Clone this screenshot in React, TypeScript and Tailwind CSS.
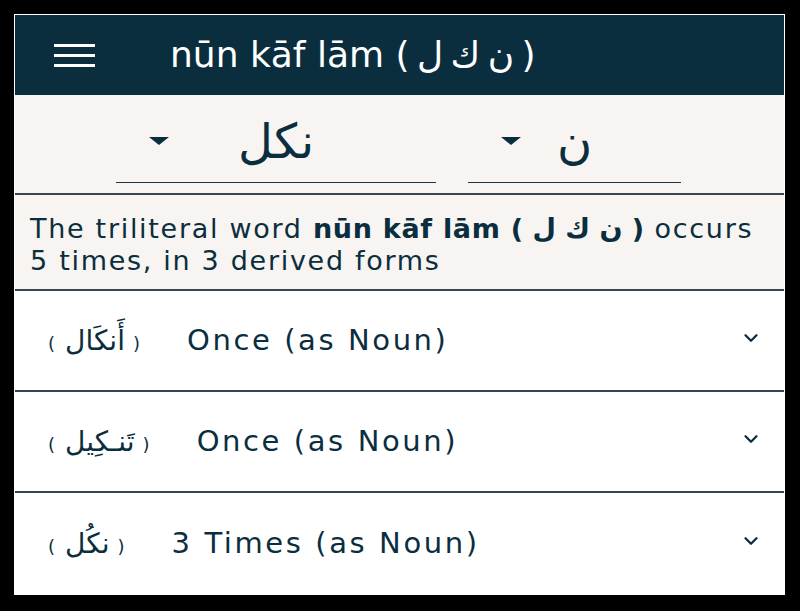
import { ChevronDown } from 'lucide-react';

const rows = [
  { ar: 'أَنكَال', label: 'Once (as Noun)' },
  { ar: 'تَنـكِيل', label: 'Once (as Noun)' },
  { ar: 'نكُل', label: '3 Times (as Noun)' },
];

function Caret() {
  return (
    <svg width="20" height="8" viewBox="0 0 20 8" className="shrink-0">
      <path d="M0 0 L20 0 L10 8 Z" fill="#0b2e3f" />
    </svg>
  );
}

function Dropdown({ value, width }: { value: string; width: string }) {
  return (
    <div className={`relative flex h-[88px] items-center border-b-[1.5px] border-[#1d3340] ${width}`}>
      <div className="absolute left-[33px] top-[42px]">
        <Caret />
      </div>
      <span dir="rtl" className="w-full pt-[4px] text-center text-[48px] text-[#0b2e3f]">
        {value}
      </span>
    </div>
  );
}

export default function App() {
  return (
    <div className="h-[611px] w-[800px] bg-black pb-[16px] pl-[14px] pr-[15px] pt-[14px] font-['DejaVu_Sans',sans-serif]">
      <div className="flex h-full flex-col overflow-hidden border border-white bg-white">
        {/* Header */}
        <header className="flex h-[80px] shrink-0 items-center bg-[#0b2e3f] text-white">
          <div className="ml-[39px] flex w-[41px] flex-col gap-[7px]">
            <span className="h-[3px] bg-white" />
            <span className="h-[3px] bg-white" />
            <span className="h-[3px] bg-white" />
          </div>
          <h1 className="ml-[75px] text-[36px] leading-none">
            nūn kāf lām <span className="[word-spacing:-4px]">( ن ك ل )</span>
          </h1>
        </header>

        {/* Root selectors */}
        <div className="flex h-[100px] shrink-0 items-start gap-[32px] border-b-2 border-[#37464f] bg-[#f7f4f2] pl-[101px]">
          <Dropdown value="نكل" width="w-[320px]" />
          <Dropdown value="ن" width="w-[213px]" />
        </div>

        {/* Summary */}
        <div className="h-[96px] shrink-0 border-b-2 border-[#37464f] bg-[#f7f4f2] px-[15px] pt-[18px] text-[27px] leading-[32px] tracking-[1.7px] text-[#0b2e3f]">
          <div className="whitespace-nowrap">
            The triliteral word{' '}
            <b className="tracking-[0.7px]">
              nūn kāf lām <span className="tracking-normal">( ن ك ل )</span>
            </b>{' '}
            occurs
          </div>
          <div>5 times, in 3 derived forms</div>
        </div>

        {/* Derived forms */}
        {rows.map((row, i) => (
          <div
            key={i}
            className={`flex h-[101px] shrink-0 items-center pl-[33px] pr-[22px] text-[#0b2e3f] ${i < rows.length - 1 ? 'border-b-2 border-[#37464f]' : ''}`}
          >
            <div className="flex flex-1 items-baseline">
              <span className="text-[18px]">(</span>
              <span dir="rtl" className="ml-[10px] text-[28px]">
                {row.ar}
              </span>
              <span className="ml-[8px] text-[18px]">)</span>
              <span className="ml-[47px] text-[29px] tracking-[2.6px]">{row.label}</span>
            </div>
            <ChevronDown className="-mt-[6px] h-[22px] w-[22px]" strokeWidth={2.5} />
          </div>
        ))}
      </div>
    </div>
  );
}
